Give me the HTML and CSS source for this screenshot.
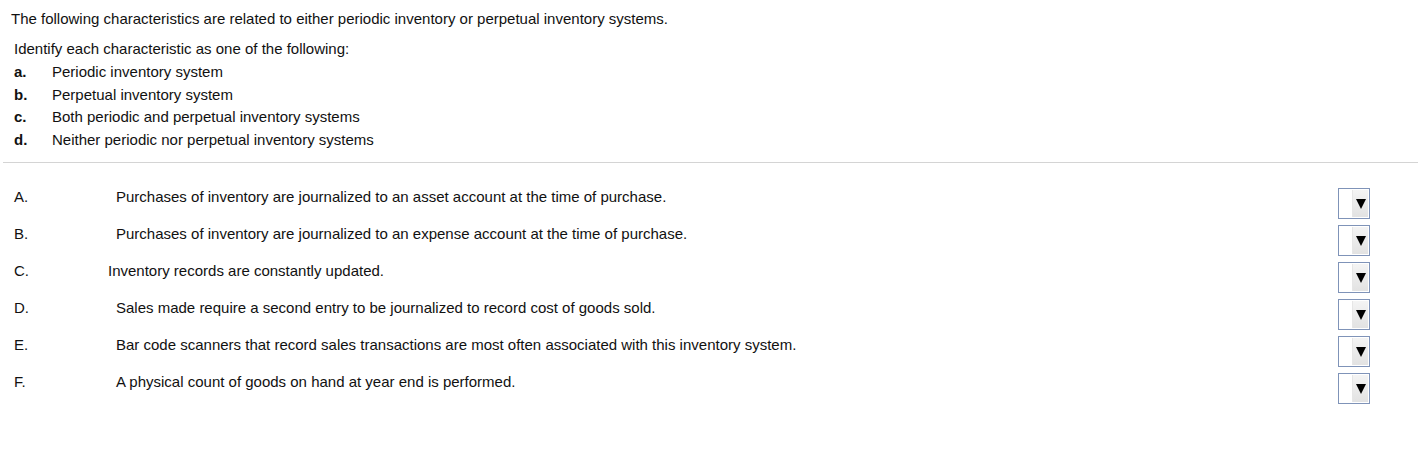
FILE: index.html
```html
<!DOCTYPE html>
<html>
<head>
<meta charset="utf-8">
<link rel="stylesheet" href="styles.css">
</head>
<body>
<p class="intro">The following characteristics are related to either periodic inventory or perpetual inventory systems.</p>
<div class="choices">
  <p class="lead">Identify each characteristic as one of the following:</p>
  <div class="choice"><b>a.</b><span>Periodic inventory system</span></div>
  <div class="choice"><b>b.</b><span>Perpetual inventory system</span></div>
  <div class="choice"><b>c.</b><span>Both periodic and perpetual inventory systems</span></div>
  <div class="choice"><b>d.</b><span>Neither periodic nor perpetual inventory systems</span></div>
</div>
<hr class="rule">
<div class="rows">
  <div class="row"><span class="lbl">A.</span><span class="txt">Purchases of inventory are journalized to an asset account at the time of purchase.</span><span class="sel"><span class="btn"><span class="tri"></span></span></span></div>
  <div class="row"><span class="lbl">B.</span><span class="txt">Purchases of inventory are journalized to an expense account at the time of purchase.</span><span class="sel"><span class="btn"><span class="tri"></span></span></span></div>
  <div class="row"><span class="lbl">C.</span><span class="txt shift">Inventory records are constantly updated.</span><span class="sel"><span class="btn"><span class="tri"></span></span></span></div>
  <div class="row"><span class="lbl">D.</span><span class="txt">Sales made require a second entry to be journalized to record cost of goods sold.</span><span class="sel"><span class="btn"><span class="tri"></span></span></span></div>
  <div class="row"><span class="lbl">E.</span><span class="txt">Bar code scanners that record sales transactions are most often associated with this inventory system.</span><span class="sel"><span class="btn"><span class="tri"></span></span></span></div>
  <div class="row"><span class="lbl">F.</span><span class="txt">A physical count of goods on hand at year end is performed.</span><span class="sel"><span class="btn"><span class="tri"></span></span></span></div>
</div>
</body>
</html>
```
FILE: styles.css
```css
html, body {
  margin: 0;
  padding: 0;
  background: #fff;
}
body {
  font-family: "Liberation Sans", Arial, sans-serif;
  font-size: 15px;
  color: #111;
}
p { margin: 0; }
.intro {
  padding: 9px 0 0 11px;
  line-height: 20px;
}
.choices {
  padding: 10px 0 0 14px;
}
.lead {
  line-height: 20px;
  margin-bottom: 2px;
}
.choice {
  display: flex;
  line-height: 22.5px;
}
.choice b {
  width: 38px;
  font-weight: bold;
}
.rule {
  border: 0;
  border-top: 1px solid #d4d4d4;
  margin: 11px 0 0 3px;
  height: 0;
}
.rows {
  padding: 24px 48px 0 14px;
}
.row {
  display: flex;
  align-items: flex-start;
  height: 37px;
  line-height: 20px;
}
.lbl {
  width: 102px;
  flex: none;
}
.txt {
  flex: 1;
}
.txt.shift {
  margin-left: -8px;
}
.sel {
  margin-top: 1px;
  width: 28px;
  height: 27px;
  border: 1px solid #7f93b8;
  display: flex;
  justify-content: flex-end;
  padding: 1px;
  flex: none;
}
.btn {
  width: 15px;
  height: 27px;
  background: linear-gradient(#f4f4f4, #e2e2e2);
  border-left: 1px solid #e6e6e6;
  display: flex;
  align-items: center;
  justify-content: center;
}
.tri {
  width: 0;
  height: 0;
  border-left: 5px solid transparent;
  border-right: 5px solid transparent;
  border-top: 10px solid #000;
}
```
